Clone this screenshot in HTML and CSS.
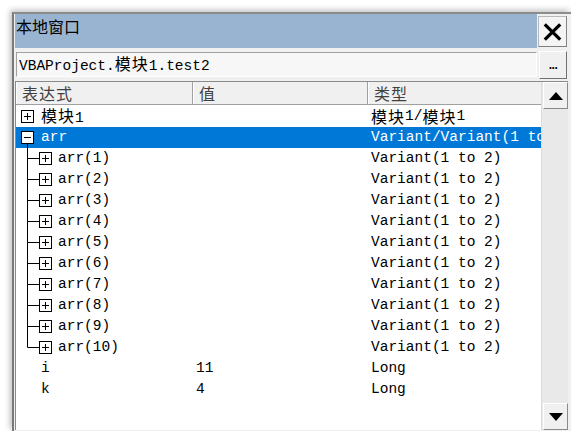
FILE: index.html
```html
<!DOCTYPE html>
<html>
<head>
<meta charset="utf-8">
<link rel="stylesheet" href="styles.css">
</head>
<body>
<div class="window">
  <div class="titlerow">
    <div class="caption">本地窗口</div>
    <div class="close">
      <svg width="28" height="28" viewBox="0 0 28 28"><path d="M6 6 L22 22 M22 6 L6 22" stroke="#000" stroke-width="3.4" fill="none"/></svg>
    </div>
  </div>
  <div class="pathrow">
    <div class="pathbox">VBAProject.<span class="cj">模块</span>1.test2</div>
    <div class="dots">...</div>
  </div>
  <div class="listwrap">
    <div class="list">
      <div class="header">
        <div class="hcell c1">表达式</div>
        <div class="hcell c2">值</div>
        <div class="hcell c3">类型</div>
      </div>
      <div class="rows">
        <div class="row">
          <div class="c1 cell">
            <svg class="g1" width="25" height="21"><rect x="5.5" y="4.5" width="12" height="12" fill="#fff" stroke="#000"/><path d="M8 10.5 H15 M11.5 7 V14" stroke="#000"/></svg>
            <span><span class="cj">模块</span>1</span>
          </div>
          <div class="c2 cell"></div>
          <div class="c3 cell"><span class="cj">模块</span>1/<span class="cj">模块</span>1</div>
        </div>
        <div class="row sel">
          <div class="c1 cell">
            <svg class="g1" width="25" height="21"><path d="M11.5 16 V21" stroke="#000"/><rect x="5.5" y="4.5" width="12" height="12" fill="#fff" stroke="#000"/><path d="M8 10.5 H15" stroke="#000"/></svg>
            <span>arr</span>
          </div>
          <div class="c2 cell"></div>
          <div class="c3 cell">Variant/Variant(1 to 2)</div>
        </div>
        <div class="row"><div class="c1 cell"><svg class="g2" width="42" height="21"><path d="M11.5 0 V21 M11.5 10.5 H23" stroke="#000"/><rect x="23.5" y="4.5" width="12" height="12" fill="#fff" stroke="#000"/><path d="M26 10.5 H33 M29.5 7 V14" stroke="#000"/></svg><span>arr(1)</span></div><div class="c2 cell"></div><div class="c3 cell">Variant(1 to 2)</div></div>
        <div class="row"><div class="c1 cell"><svg class="g2" width="42" height="21"><path d="M11.5 0 V21 M11.5 10.5 H23" stroke="#000"/><rect x="23.5" y="4.5" width="12" height="12" fill="#fff" stroke="#000"/><path d="M26 10.5 H33 M29.5 7 V14" stroke="#000"/></svg><span>arr(2)</span></div><div class="c2 cell"></div><div class="c3 cell">Variant(1 to 2)</div></div>
        <div class="row"><div class="c1 cell"><svg class="g2" width="42" height="21"><path d="M11.5 0 V21 M11.5 10.5 H23" stroke="#000"/><rect x="23.5" y="4.5" width="12" height="12" fill="#fff" stroke="#000"/><path d="M26 10.5 H33 M29.5 7 V14" stroke="#000"/></svg><span>arr(3)</span></div><div class="c2 cell"></div><div class="c3 cell">Variant(1 to 2)</div></div>
        <div class="row"><div class="c1 cell"><svg class="g2" width="42" height="21"><path d="M11.5 0 V21 M11.5 10.5 H23" stroke="#000"/><rect x="23.5" y="4.5" width="12" height="12" fill="#fff" stroke="#000"/><path d="M26 10.5 H33 M29.5 7 V14" stroke="#000"/></svg><span>arr(4)</span></div><div class="c2 cell"></div><div class="c3 cell">Variant(1 to 2)</div></div>
        <div class="row"><div class="c1 cell"><svg class="g2" width="42" height="21"><path d="M11.5 0 V21 M11.5 10.5 H23" stroke="#000"/><rect x="23.5" y="4.5" width="12" height="12" fill="#fff" stroke="#000"/><path d="M26 10.5 H33 M29.5 7 V14" stroke="#000"/></svg><span>arr(5)</span></div><div class="c2 cell"></div><div class="c3 cell">Variant(1 to 2)</div></div>
        <div class="row"><div class="c1 cell"><svg class="g2" width="42" height="21"><path d="M11.5 0 V21 M11.5 10.5 H23" stroke="#000"/><rect x="23.5" y="4.5" width="12" height="12" fill="#fff" stroke="#000"/><path d="M26 10.5 H33 M29.5 7 V14" stroke="#000"/></svg><span>arr(6)</span></div><div class="c2 cell"></div><div class="c3 cell">Variant(1 to 2)</div></div>
        <div class="row"><div class="c1 cell"><svg class="g2" width="42" height="21"><path d="M11.5 0 V21 M11.5 10.5 H23" stroke="#000"/><rect x="23.5" y="4.5" width="12" height="12" fill="#fff" stroke="#000"/><path d="M26 10.5 H33 M29.5 7 V14" stroke="#000"/></svg><span>arr(7)</span></div><div class="c2 cell"></div><div class="c3 cell">Variant(1 to 2)</div></div>
        <div class="row"><div class="c1 cell"><svg class="g2" width="42" height="21"><path d="M11.5 0 V21 M11.5 10.5 H23" stroke="#000"/><rect x="23.5" y="4.5" width="12" height="12" fill="#fff" stroke="#000"/><path d="M26 10.5 H33 M29.5 7 V14" stroke="#000"/></svg><span>arr(8)</span></div><div class="c2 cell"></div><div class="c3 cell">Variant(1 to 2)</div></div>
        <div class="row"><div class="c1 cell"><svg class="g2" width="42" height="21"><path d="M11.5 0 V21 M11.5 10.5 H23" stroke="#000"/><rect x="23.5" y="4.5" width="12" height="12" fill="#fff" stroke="#000"/><path d="M26 10.5 H33 M29.5 7 V14" stroke="#000"/></svg><span>arr(9)</span></div><div class="c2 cell"></div><div class="c3 cell">Variant(1 to 2)</div></div>
        <div class="row"><div class="c1 cell"><svg class="g2" width="42" height="21"><path d="M11.5 0 V10.5 H23" stroke="#000" fill="none"/><rect x="23.5" y="4.5" width="12" height="12" fill="#fff" stroke="#000"/><path d="M26 10.5 H33 M29.5 7 V14" stroke="#000"/></svg><span>arr(10)</span></div><div class="c2 cell"></div><div class="c3 cell">Variant(1 to 2)</div></div>
        <div class="row"><div class="c1 cell"><span class="pad1">i</span></div><div class="c2 cell">11</div><div class="c3 cell">Long</div></div>
        <div class="row"><div class="c1 cell"><span class="pad1">k</span></div><div class="c2 cell">4</div><div class="c3 cell">Long</div></div>
      </div>
    </div>
    <div class="vscroll">
      <div class="sbtn"><svg width="14" height="8" viewBox="0 0 14 8"><path d="M0 8 L7 0 L14 8 Z" fill="#000"/></svg></div>
      <div class="track"></div>
      <div class="sbtn"><svg width="14" height="8" viewBox="0 0 14 8"><path d="M0 0 L14 0 L7 8 Z" fill="#000"/></svg></div>
    </div>
  </div>
</div>
</body>
</html>
```

FILE: styles.css
```css
html, body {
  margin: 0;
  padding: 0;
  background: #ffffff;
}
body {
  width: 571px;
  height: 431px;
  overflow: hidden;
  font-family: "Liberation Mono", "Noto Sans CJK SC", monospace;
}
.window {
  margin: 12px 0 0 12px;
  width: 559px;
  height: 419px;
  background: #f0f0f0;
  border-left: 2px solid #7a7a7a;
  border-top: 2px solid #8c8c8c;
  box-shadow: -2px -2px 6px rgba(0, 0, 0, 0.25);
  display: flex;
  flex-direction: column;
  box-sizing: border-box;
}
.titlerow {
  display: flex;
  height: 34px;
  padding-left: 1px;
}
.caption {
  flex: 1;
  background: #99b4d1;
  font-family: "Noto Sans CJK SC", sans-serif;
  font-size: 16px;
  line-height: 22px;
  padding: 1px 0 0 1px;
  color: #000;
}
.close {
  width: 27px;
  height: 29px;
  margin: 2px 4px 0 1px;
  background: #f4f4f4;
  border: 1px solid #b8b8b8;
  border-right-color: #808080;
  border-bottom-color: #808080;
  display: flex;
  align-items: center;
  justify-content: center;
}
.pathrow {
  display: flex;
  align-items: center;
  height: 33px;
  padding: 0 4px 0 2px;
  gap: 2px;
}
.pathbox {
  flex: 1;
  height: 25px;
  box-sizing: border-box;
  background: #f7f7f7;
  border: 1px solid #a0a0a0;
  border-right-color: #ffffff;
  border-bottom-color: #ffffff;
  font-size: 14.5px;
  line-height: 21px;
  padding-left: 2px;
  color: #000;
  white-space: nowrap;
}
.dots {
  width: 28px;
  height: 28px;
  box-sizing: border-box;
  background: #f0f0f0;
  border: 1px solid #ffffff;
  border-right-color: #707070;
  border-bottom-color: #707070;
  font-family: "Liberation Sans", sans-serif;
  font-weight: bold;
  font-size: 12px;
  text-align: center;
  line-height: 26px;
  letter-spacing: -0.5px;
}
.cj {
  font-family: "Noto Sans CJK SC", sans-serif;
  font-size: 16px;
  letter-spacing: 1px;
}
.listwrap {
  flex: 1;
  display: flex;
  margin: 0 3px 1px 1px;
  border-top: 1px solid #8a8a8a;
  border-left: 1px solid #8a8a8a;
  background: #ffffff;
  min-height: 0;
}
.list {
  width: 525px;
  overflow: hidden;
  display: flex;
  flex-direction: column;
}
.header {
  display: flex;
  height: 23px;
  background: #f0f0f0;
  border-bottom: 1px solid #a0a0a0;
  box-sizing: border-box;
  flex: none;
}
.hcell {
  box-sizing: border-box;
  font-family: "Noto Sans CJK SC", sans-serif;
  font-size: 16px;
  letter-spacing: 1px;
  line-height: 22px;
  color: #404040;
  border-left: 1px solid #ffffff;
  border-right: 1px solid #a0a0a0;
  white-space: nowrap;
}
.header .c1 { padding-left: 5px; }
.header .c2 { padding-left: 5px; }
.header .c3 { padding-left: 5px; border-right: none; }
.c1 { width: 177px; flex: none; }
.c2 { width: 175px; flex: none; }
.c3 { width: 173px; flex: none; }
.rows {
  display: flex;
  flex-direction: column;
  padding-top: 1px;
}
.row {
  display: flex;
  height: 21px;
  font-size: 14.5px;
  line-height: 21px;
  color: #000;
  white-space: nowrap;
}
.row.sel {
  background: #0078d7;
  color: #ffffff;
}
.cell {
  display: flex;
  align-items: center;
}
.row.sel .c3 {
  overflow: hidden;
}
.c2.cell { padding-left: 3px; box-sizing: border-box; }
.c3.cell { padding-left: 3px; box-sizing: border-box; }
.cell svg { flex: none; display: block; }
.pad1 { padding-left: 25px; }
.vscroll {
  width: 27px;
  display: flex;
  flex-direction: column;
  background: #e9e9e9;
  border-left: 1px solid #dcdcdc;
  box-sizing: border-box;
}
.sbtn {
  height: 27px;
  margin-left: 1px;
  background: #f0f0f0;
  border: 1px solid #ffffff;
  border-right-color: #8a8a8a;
  border-bottom-color: #8a8a8a;
  box-sizing: border-box;
  display: flex;
  align-items: center;
  justify-content: center;
}
.track {
  flex: 1;
}
```
